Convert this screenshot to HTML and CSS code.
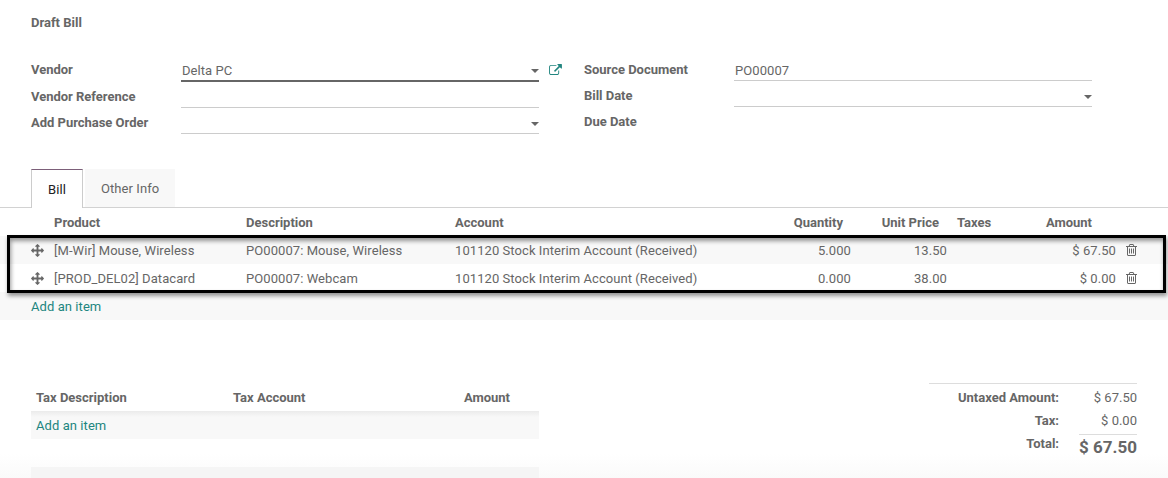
FILE: index.html
```html
<!DOCTYPE html>
<html lang="en">
<head>
<meta charset="utf-8">
<title>Draft Bill</title>
<link rel="stylesheet" href="styles.css">
</head>
<body>
<svg class="sprite" aria-hidden="true">
  <symbol id="move" viewBox="0 0 1792 1792"><path d="M1792 896q0 26-19 45l-256 256q-19 19-45 19t-45-19-19-45v-128h-384v384h128q26 0 45 19t19 45-19 45l-256 256q-19 19-45 19t-45-19l-256-256q-19-19-19-45t19-45 45-19h128v-384h-384v128q0 26-19 45t-45 19-45-19l-256-256q-19-19-19-45t19-45l256-256q19-19 45-19t45 19 19 45v128h384v-384h-128q-26 0-45-19t-19-45 19-45l256-256q19-19 45-19t45 19l256 256q19 19 19 45t-19 45-45 19h-128v384h384v-128q0-26 19-45t45-19 45 19l256 256q19 19 19 45z"/></symbol>
  <symbol id="trash" viewBox="192 128 1408 1536"><path d="M704 736v576q0 14-9 23t-23 9h-64q-14 0-23-9t-9-23v-576q0-14 9-23t23-9h64q14 0 23 9t9 23zm256 0v576q0 14-9 23t-23 9h-64q-14 0-23-9t-9-23v-576q0-14 9-23t23-9h64q14 0 23 9t9 23zm256 0v576q0 14-9 23t-23 9h-64q-14 0-23-9t-9-23v-576q0-14 9-23t23-9h64q14 0 23 9t9 23zm128 724v-948h-896v948q0 22 7 40.5t14.5 27 10.5 8.5h832q3 0 10.5-8.5t14.5-27 7-40.5zm-672-1076h448l-48-117q-7-9-17-11h-317q-10 2-17 11zm928 32v64q0 14-9 23t-23 9h-96v948q0 83-47 143.5t-113 60.5h-832q-66 0-113-58.5t-47-141.5v-952h-96q-14 0-23-9t-9-23v-64q0-14 9-23t23-9h309l70-167q15-37 54-63t79-26h320q40 0 79 26t54 63l70 167h309q14 0 23 9t9 23z"/></symbol>
  <symbol id="external" viewBox="0 0 1792 1536"><path d="M1408 928v320q0 119-84.5 203.5t-203.5 84.5h-832q-119 0-203.5-84.5t-84.5-203.5v-832q0-119 84.5-203.5t203.5-84.5h704q14 0 23 9t9 23v64q0 14-9 23t-23 9h-704q-66 0-113 47t-47 113v832q0 66 47 113t113 47h832q66 0 113-47t47-113v-320q0-14 9-23t23-9h64q14 0 23 9t9 23zm384-864v512q0 26-19 45t-45 19-45-19l-176-176-652 652q-10 10-23 10t-23-10l-114-114q-10-10-10-23t10-23l652-652-176-176q-19-19-19-45t19-45 45-19h512q26 0 45 19t19 45z"/></symbol>
</svg>
<main class="sheet">
  <h1 class="title">Draft Bill</h1>
  <section class="fields">
    <div class="group">
      <div class="field"><label>Vendor</label><div class="input active"><span>Delta PC</span><i class="caret"></i></div><svg class="external"><use href="#external"/></svg></div>
      <div class="field"><label>Vendor Reference</label><div class="input"></div></div>
      <div class="field"><label>Add Purchase Order</label><div class="input"><i class="caret"></i></div></div>
    </div>
    <div class="group second">
      <div class="field"><label>Source Document</label><div class="input"><span>PO00007</span></div></div>
      <div class="field"><label>Bill Date</label><div class="input"><i class="caret"></i></div></div>
      <div class="field"><label>Due Date</label></div>
    </div>
  </section>
  <nav class="tabs"><a class="tab current">Bill</a><a class="tab">Other Info</a></nav>
  <section class="lines">
    <div class="line head"><span></span><span>Product</span><span>Description</span><span>Account</span><span class="num">Quantity</span><span class="num">Unit Price</span><span class="taxes">Taxes</span><span class="num amount">Amount</span><span></span></div>
    <div class="line shaded"><svg class="move"><use href="#move"/></svg><span>[M-Wir] Mouse, Wireless</span><span>PO00007: Mouse, Wireless</span><span>101120 Stock Interim Account (Received)</span><span class="num">5.000</span><span class="num">13.50</span><span></span><span class="num">$ 67.50</span><svg class="trash"><use href="#trash"/></svg></div>
    <div class="line"><svg class="move"><use href="#move"/></svg><span>[PROD_DEL02] Datacard</span><span>PO00007: Webcam</span><span>101120 Stock Interim Account (Received)</span><span class="num">0.000</span><span class="num">38.00</span><span></span><span class="num">$ 0.00</span><svg class="trash"><use href="#trash"/></svg></div>
    <div class="add shaded"><a>Add an item</a></div>
    <div class="highlight"></div>
  </section>
  <section class="footer">
    <div class="taxtable">
      <div class="taxhead"><span>Tax Description</span><span>Tax Account</span><span class="num">Amount</span></div>
      <div class="taxrow first"><a>Add an item</a></div>
      <div class="taxrow blank"></div>
      <div class="taxrow"></div>
    </div>
    <div class="totals">
      <div class="total"><b>Untaxed Amount:</b><span>$ 67.50</span></div>
      <div class="total"><b>Tax:</b><span>$ 0.00</span></div>
      <div class="total grand"><b>Total:</b><span class="sum">$ 67.50</span></div>
    </div>
  </section>
</main>
</body>
</html>
```
FILE: styles.css
```css
* { box-sizing: border-box; }
body { margin: 0; background: #fff; color: #666; font: 13px/20px Roboto, "Liberation Sans", sans-serif; letter-spacing: 0.07px; }
.sprite { position: absolute; width: 0; height: 0; }
svg { display: block; fill: currentColor; }
.sheet { width: 1168px; height: 478px; overflow: hidden; background: linear-gradient(to bottom, #fff 454px, #fafafa 478px); }
.title { margin: 0; padding: 13px 31px 0; height: 58px; font-size: 13px; line-height: 20px; letter-spacing: 0; }
.fields { display: flex; height: 111px; padding-left: 31px; }
.group { width: 553px; }
.field { display: flex; height: 26px; align-items: flex-start; }
.field label { width: 150px; padding-top: 2px; font-weight: 700; letter-spacing: -0.02px; }
.group:not(.second) .field:first-child { height: 27px; }
.input { display: flex; align-items: flex-start; width: 358px; height: 23px; padding: 3px 1px 0; border-bottom: 1px solid #ccc; }
.input.active { height: 24px; border-bottom: 2px solid #666; }
.caret { margin: 8px -1px 0 auto; border: 4px solid transparent; border-top-color: #666; border-bottom: 0; }
.external { width: 13px; height: 11px; margin: 6px 0 0 10px; color: #21857f; }
.tabs { display: flex; gap: 2px; height: 39px; padding-left: 31px; border-bottom: 1px solid #d2d2d2; }
.tab { width: 90px; height: 38px; padding: 10px 0 0 16px; background: #f8f8f8; white-space: nowrap; }
.tab.current { height: 39px; width: 52px; background: #fff; color: #222; border: 1px solid #ccc; border-top-color: #7c5f79; border-bottom: 0; }
.lines { position: relative; }
.line { display: grid; grid-template-columns: 23px 192px 209px 301px 95px 96px 10px 159px 1fr; align-items: center; height: 28px; padding-left: 31px; white-space: nowrap; }
.line > span { padding-top: 2px; }
.head { font-weight: 700; letter-spacing: 0; }
.head .num { padding-right: 8px; }
.head .amount { padding-right: 24px; }
.head .taxes { padding-left: 10px; }
.num { text-align: right; }
.shaded { background: #f8f8f8; }
.move { width: 13px; height: 13px; }
.trash { width: 11px; height: 12px; margin-left: 10px; }
.add { height: 28px; padding: 5px 31px; }
a { color: inherit; }
.add a, .taxrow a { color: #21857f; }
.highlight { position: absolute; left: 7px; top: 27px; width: 1159px; height: 58px; border: 3px solid #000; box-shadow: 1px 3px 4px rgba(0,0,0,.4), inset 1px 3px 4px rgba(0,0,0,.4); }
.footer { display: flex; justify-content: space-between; padding: 63px 31px 0; }
.taxtable { width: 508px; }
.taxhead { display: grid; grid-template-columns: 197px 200px 77px; height: 28px; padding: 5px; font-weight: 700; letter-spacing: 0; }
.taxrow { height: 28px; padding: 5px; background: #f5f5f5; }
.taxrow.first { background: linear-gradient(to bottom, #ebebeb, #f8f8f8 6px); }
.taxrow.blank { background: none; }
.totals { width: 208px; border-top: 1px solid #ddd; padding-top: 4px; }
.total { display: flex; justify-content: flex-end; height: 23px; letter-spacing: 0; }
.total span { width: 78px; text-align: right; }
.total .sum { width: 58px; height: 26px; margin-left: 20px; border-top: 1px solid #ddd; padding-top: 1px; font-size: 17px; line-height: 22px; font-weight: 700; white-space: nowrap; }
```
